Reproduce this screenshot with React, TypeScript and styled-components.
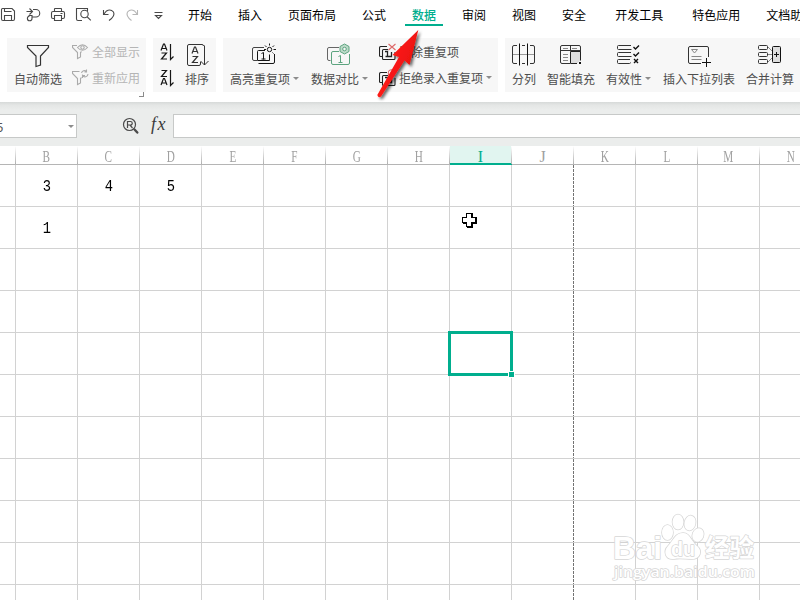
import React from "react";
import styled, { createGlobalStyle, css } from "styled-components";

const GREEN = "#00ae8e";

const GlobalStyle = createGlobalStyle`
  *, *::before, *::after { box-sizing: border-box; }
  html, body { margin: 0; padding: 0; background: #fff; overflow: hidden; }
  body { font: 12px/16px "Noto Sans CJK SC", sans-serif; color: #000; }
  svg { display: block; flex: none; }
`;

const Window = styled.div`
  position: relative;
  width: 800px;
  height: 600px;
  overflow: hidden;
  background: #fff;
`;

const MenuBar = styled.div`
  display: flex;
  height: 30px;
`;

const QuickTools = styled.div`
  display: flex;
  width: 188px;
  height: 30px;
  flex: none;
`;

const MenuItem = styled.div<{ $active?: boolean; $gap?: number }>`
  flex: none;
  height: 26px;
  padding-top: 6px;
  margin-right: ${(p) => (p.$active ? 19 : p.$gap ?? 26)}px;
  line-height: 17px;
  white-space: nowrap;
  ${(p) =>
    p.$active &&
    css`
      margin-left: -7px;
      padding-left: 7px;
      padding-right: 7px;
      color: ${GREEN};
      font-weight: 500;
      border-bottom: 2px solid ${GREEN};
    `}
`;

const Ribbon = styled.div`
  display: flex;
  gap: 7px;
  height: 72px;
  padding: 8px 0 0 7px;
`;

const Group = styled.div<{ $w: number }>`
  position: relative;
  display: flex;
  flex: none;
  width: ${(p) => p.$w}px;
  height: 54px;
  background: #f7f7f7;
`;

const Tool = styled.div<{ $w: number; $ml?: number; $icon?: number }>`
  display: flex;
  flex-direction: column;
  align-items: flex-start;
  flex: none;
  width: ${(p) => p.$w}px;
  margin-left: ${(p) => p.$ml ?? 0}px;
  padding-top: 4px;
  > svg {
    margin-left: ${(p) => p.$icon ?? 0}px;
  }
`;

const Label = styled.div<{ $muted?: boolean }>`
  display: flex;
  align-items: center;
  height: 17px;
  margin-top: -1px;
  line-height: 17px;
  white-space: nowrap;
  color: ${(p) => (p.$muted ? "#b5b5b5" : "#4d4d4d")};
`;

const ToolLabel = styled(Label)`
  margin-top: 2px;
`;

const Stack = styled.div<{ $w: number; $ml?: number }>`
  display: flex;
  flex-direction: column;
  flex: none;
  width: ${(p) => p.$w}px;
  margin-left: ${(p) => p.$ml ?? 0}px;
  padding-top: 1px;
`;

const StackRow = styled.div`
  display: flex;
  align-items: center;
  height: 26px;
  gap: 2px;
`;

const Caret = styled.i`
  width: 0;
  height: 0;
  margin-left: 3px;
  border: 3px solid transparent;
  border-top-color: #8c8c8c;
  border-bottom: 0;
`;

const Corner = styled.i`
  position: absolute;
  right: 2px;
  bottom: -5px;
  width: 5px;
  height: 5px;
  border: solid #8a8a8a;
  border-width: 0 1px 1px 0;
`;

const FormulaBar = styled.div`
  display: flex;
  height: 44px;
  padding-top: 12px;
  background: linear-gradient(#d6d9d8 0, #e4e6e5 3px, #ebedec 8px);
`;

const NameBox = styled.div`
  display: flex;
  align-items: center;
  justify-content: space-between;
  flex: none;
  width: 77px;
  height: 24px;
  padding-right: 2px;
  background: #fff;
  border: solid #c7c9c8;
  border-width: 1px 1px 1px 0;
  font: 13px "Noto Sans", sans-serif;
  color: #555;
`;

const NameText = styled.span`
  margin: 2px 0 0 -4px;
`;

const FormulaTools = styled.div`
  display: flex;
  flex: none;
  width: 96px;
  padding-left: 45px;
`;

const Fx = styled.span`
  margin: 0 0 0 11px;
  font: italic 18px/21px "Liberation Serif", serif;
  color: #3c3c3c;
  letter-spacing: 1.5px;
`;

const FormulaInput = styled.div`
  flex: 1;
  height: 24px;
  background: #fff;
  border: 1px solid #c7c9c8;
  border-right: 0;
`;

const SheetHeader = styled.div`
  display: flex;
  height: 19px;
  background: #fff;
`;

const HeaderCell = styled.div<{ $first?: boolean; $active?: boolean }>`
  flex: none;
  position: relative;
  display: flex;
  align-items: center;
  justify-content: center;
  width: ${(p) => (p.$first ? 16 : 62)}px;
  height: 19px;
  padding: ${(p) => (p.$active ? 4 : 3)}px 1px 0 0;
  color: ${(p) => (p.$active ? GREEN : "#a0a0a0")};
  background: ${(p) => (p.$active ? "#e1f5f0" : "#fff")};
  border-bottom: ${(p) => (p.$active ? `2px solid ${GREEN}` : "1px solid #b5b5b5")};
  font: 16px/16px "Liberation Serif", serif;
  &::after {
    content: "";
    position: absolute;
    right: 0;
    top: 0;
    width: 1px;
    height: 18px;
    background: linear-gradient(#fff, #b0b0b0);
  }
`;

const Letter = styled.span<{ $wide?: boolean }>`
  transform: scaleX(${(p) => (p.$wide ? 1 : 0.7)});
`;

const SheetRow = styled.div`
  display: flex;
  height: 42px;
`;

const Cell = styled.div<{ $first?: boolean; $pageEnd?: boolean }>`
  flex: none;
  display: flex;
  align-items: center;
  justify-content: center;
  width: ${(p) => (p.$first ? 16 : 62)}px;
  height: 42px;
  padding: 3px 0 0 1px;
  border-bottom: 1px solid #d2d2d2;
  border-right: ${(p) => (p.$pageEnd ? "0" : "1px solid #d2d2d2")};
  font: 16px/16px "Liberation Mono", monospace;
  ${(p) =>
    p.$pageEnd &&
    css`
      background: repeating-linear-gradient(#737373 0 3px, #fff 3px 4px) right / 1px 100% no-repeat;
    `}
`;

const Digit = styled.span`
  transform: scaleX(0.86);
`;

const Selection = styled.div`
  position: absolute;
  left: 448px;
  top: 331px;
  width: 65px;
  height: 45px;
  border: 3px solid ${GREEN};
  &::after {
    content: "";
    position: absolute;
    right: -5px;
    bottom: -5px;
    width: 7px;
    height: 7px;
    background: ${GREEN};
    border: 1px solid #fff;
  }
`;

const Overlay = styled.svg<{ $x: number; $y: number }>`
  position: absolute;
  left: ${(p) => p.$x}px;
  top: ${(p) => p.$y}px;
  overflow: visible;
`;

type IconProps = { w: number; h: number; stroke?: string; sw?: number; children: React.ReactNode };
const Icon = ({ w, h, stroke = "#333", sw = 1, children }: IconProps) => (
  <svg width={w} height={h} viewBox={`0 0 ${w} ${h}`} fill="none" stroke={stroke} strokeWidth={sw}>
    {children}
  </svg>
);

const QuickIcons = () => (
  <Icon w={170} h={30} stroke="#484848" sw={1.1}>
    <path d="M1.5 19V9.500q0-1 1-1h9.500l2.500 2.500v8q0 1.500-1.500 1.500H3q-1.500 0-1.500-1.500zM4.500 8.500v3h7M4.500 20v-4.500h7V20" />
    <path d="M26.500 11.500h6M29.500 8.500l3 3-3 3M33 9.500h3a3.700 3.700 0 0 1 0 7.500h-4.500M28.500 15.500h3.500v3a2.300 2.300 0 1 1-2.500-2.300" />
    <path d="M54.500 11.500V9q0-.5.5-.5h6q.5 0 .5.500v2.500M54 18.500h-1q-1.500 0-1.500-1.500v-4q0-1.500 1.500-1.500h10q1.500 0 1.500 1.500v4q0 1.500-1.500 1.500h-1M54.500 15.500h7v5h-7zM60.500 13.500h2" />
    <path d="M82 20.500h-4q-1.500 0-1.500-1.500V8.500h11v3" />
    <circle cx="84.500" cy="14" r="3.700" />
    <path d="M87.300 17l3.500 3.300" />
    <path d="M103.500 10v4.500h5M103.500 14.500l3-3.500q4-2.500 7 1 2 4-4.500 8.500" />
    <path stroke="#b6b6b6" d="M137.500 10v4.500h-5M137.500 14.500l-3-3.500q-4-2.500-7 1-2 4 4 8.500" />
    <path d="M154.500 12.500h8M155.500 15.500h6l-3 3z" />
  </Icon>
);

const FunnelIcon = () => (
  <Icon w={24} h={26} sw={1.2}>
    <path d="M1.500 3.500h21v2l-8 8.500v9l-4.500 1.500V14L1.500 5.500z" />
  </Icon>
);

const MiniFunnel = ({ kind }: { kind: "eye" | "refresh" }) => (
  <Icon w={18} h={18} stroke="#aaa" sw={1.1}>
    {kind === "eye" ? (
      <>
        <path d="M5 2.500H.5v2l5 5v6l3-1.500V9.500l1-1" />
        <path d="M5.500 4.500q5-5.500 10 0-5 5.500-10 0z" />
        <circle cx="10.500" cy="4.500" r="1.700" />
      </>
    ) : (
      <>
        <path d="M7.500 2.500H.5v2l5 5v6l3-1.500V9.500l1-1" />
        <path d="M9.500 4a3 3 0 0 1 5-1.500V.5M15 3h-2.500M16 5a3 3 0 0 1-5.500 1.500V9M10.500 6.500h2.500" />
      </>
    )}
  </Icon>
);

const A = "M0 6.500L2.500 0H3.500L6 6.500M1 4.500h4";
const Z = "M.5 .5h5L.5 6.500h5.500";
const SortIcon = ({ desc }: { desc?: boolean }) => (
  <Icon w={16} h={18} stroke="#161616" sw={1.2}>
    <path transform="translate(1 1)" d={desc ? Z : A} />
    <path transform="translate(1 9.500)" d={desc ? A : Z} />
    <path d="M10.500 1v15.500l3-3" />
  </Icon>
);

const SortBigIcon = () => (
  <Icon w={24} h={26}>
    <path d="M15.500 20v2q0 1.500-1.500 1.500H4q-1.500 0-1.500-1.500V4Q2.500 2.500 4 2.500h13q1.500 0 1.500 1.500" />
    <path strokeWidth="1.200" transform="translate(7 5)" d={A} />
    <path strokeWidth="1.200" transform="translate(7 14)" d={Z} />
    <path d="M19.500 3.500v19.500M15.500 19l4 4 4-4" />
  </Icon>
);

const HighlightIcon = () => (
  <Icon w={28} h={26} stroke="#444">
    <path d="M14 5.500H4q-1.500 0-1.500 1.500v10q0 1.500 1.500 1.500h3" />
    <g stroke="#161616">
      <path d="M15 8.500H8.500q-1 0-1 1v9h12v-6M8.500 21.500H23q1.500 0 1.500-1.500v-8" />
      <path d="M11.500 11.500l2-1v7M11.500 17h4" />
      <circle cx="19.500" cy="7.500" r="2.200" />
      <path d="M19.500 1.500v2M14 7.500h2M23.500 7.500h2.500M15 3.500l1.500 1.500M24 3.500l-1.500 1.500M23.500 11.500l-1-1" />
    </g>
  </Icon>
);

const CompareIcon = () => (
  <Icon w={28} h={26} stroke="#666">
    <path d="M14 5.500H4q-1.500 0-1.500 1.500v10q0 1.500 1.500 1.500h1.500" />
    <g stroke="#5ca47f">
      <path d="M14 9.500H8q-1.500 0-1.500 1.500v10q0 1.500 1.500 1.500h15q1.500 0 1.500-1.500v-9" />
      <path d="M13.500 14.500l2-1v7M13.500 20.500h4" />
      <path fill="#bddac9" d="M19.500 2l4.500 2.500v5L19.500 12 15 9.500v-5z" />
      <circle cx="19.500" cy="7" r="1.800" fill="#f7f7f7" />
    </g>
  </Icon>
);

const DuplicateIcon = ({ ban }: { ban?: boolean }) => (
  <Icon w={18} h={18} stroke="#222" sw={1.1}>
    <path d="M8 3.500H2Q.5 3.500.5 5v7.500q0 1 1 1H3M9 6.500H4.500q-1 0-1 1v8q0 1 1 1H15q1 0 1-1V9" />
    <path d="M6 8.500h2.500v5M6.500 13.500h6V9" strokeWidth="1.300" />
    {ban ? (
      <g stroke="#dd6969">
        <circle cx="12.500" cy="4" r="3.200" />
        <path d="M10.500 6l4-4" />
      </g>
    ) : (
      <path stroke="#dd6969" d="M9.500 1l7 6M16.500 1l-7 6" />
    )}
  </Icon>
);

const SplitIcon = () => (
  <Icon w={24} h={26}>
    <path d="M6 3.500H3q-1.500 0-1.500 1.500v15q0 1.500 1.500 1.500h3M11 3.500h3M11 21.500h3M19 3.500h3q1.500 0 1.500 1.500v15q0 1.500-1.500 1.500h-3" />
    <path stroke="#999" d="M2 12.500h21" />
    <path stroke="#111" d="M8.500 1.500v22M16.500 1.500v22" />
  </Icon>
);

const FillIcon = () => (
  <Icon w={24} h={26}>
    <path d="M12 21.500H4q-1.500 0-1.500-1.500V5Q2.500 3.500 4 3.500h17q1.500 0 1.500 1.500v13M2.500 8.500h20M12.500 3.500v5" />
    <path stroke="#888" d="M5 6.500h5M14 6.500h5M5 12.500h5M5 15.500h5M5 18.500h5" />
    <path fill="#ddd" stroke="#222" d="M19 21.500h-6.500v-12h10v9" />
    <path fill="#111" stroke="none" d="M21 20h2v2h-2z" />
  </Icon>
);

const ValidityIcon = () => (
  <Icon w={24} h={26}>
    <path d="M15 3.500H2.500q-1 0-1 1v2q0 1 1 1h13M15 10.500H2.500q-1 0-1 1v2q0 1 1 1h13M14 17.500H2.500q-1 0-1 1v2q0 1 1 1h11q1 0 1-1" />
    <path stroke="#111" strokeWidth="1.400" d="M17.500 5l2 2 3.500-3.500M17.500 12l2 2 3.500-3.500M18 17l4 4M22 17l-4 4" />
  </Icon>
);

const DropListIcon = () => (
  <Icon w={26} h={26}>
    <path d="M15 21.500H4q-1.500 0-1.500-1.500V6q0-1.500 1.500-1.500h17q1.500 0 1.500 1.500v9" />
    <path stroke="#888" d="M5.500 7.500h6L8.500 11zM5.500 14.500h10M5.500 17.500h10" />
    <path stroke="#111" d="M20.500 16v9M16 20.500h9" />
  </Icon>
);

const MergeIcon = () => (
  <Icon w={24} h={26}>
    <rect x="1.500" y="3.500" width="9" height="4" rx="1" />
    <rect x="1.500" y="10.500" width="9" height="4" rx="1" />
    <rect x="1.500" y="17.500" width="9" height="4" rx="1" />
    <path d="M11 5l4 4M11 12.500h4M11 20l4-4" stroke="#888" />
    <rect x="15.500" y="4.500" width="8" height="16" rx="1" fill="#ddd" stroke="#111" />
    <path stroke="#111" d="M17 12.500h5M19.500 10v5" />
  </Icon>
);

const menus: { text: string; gap?: number; active?: boolean }[] = [
  { text: "开始" }, { text: "插入" }, { text: "页面布局" }, { text: "公式" },
  { text: "数据", active: true }, { text: "审阅" }, { text: "视图" },
  { text: "安全", gap: 29 }, { text: "开发工具", gap: 29 }, { text: "特色应用" }, { text: "文档助手" },
];

const columns = ["", "B", "C", "D", "E", "F", "G", "H", "I", "J", "K", "L", "M", "N"];
const values: Record<string, string>[] = [{ B: "3", C: "4", D: "5" }, { B: "1" }, {}, {}, {}, {}, {}, {}, {}, {}, {}];

const RedArrow = () => (
  <Overlay $x={370} $y={24} width="60" height="80" viewBox="370 24 60 80">
    <defs>
      <linearGradient id="red" x1="0" y1="0" x2="1" y2=".6">
        <stop offset=".4" stopColor="#ff1c16" />
        <stop offset="1" stopColor="#e30e0e" />
      </linearGradient>
      <filter id="shade" x="-30%" y="-30%" width="170%" height="170%">
        <feDropShadow dx="2" dy="2" stdDeviation="1.500" floodColor="#000" floodOpacity=".6" />
      </filter>
    </defs>
    <path
      filter="url(#shade)"
      fill="url(#red)"
      d="M418.300 30L409.500 65L404.500 60.500L381 96.500Q378.500 98.500 377.300 95L399 57L392.500 55Z"
    />
  </Overlay>
);

const CrossCursor = () => (
  <Overlay $x={462} $y={213} width="15" height="15" viewBox="0 0 15 15" shapeRendering="crispEdges">
    <path d="M4 0h6l1 1v3h3l1 1v6h-4v4H5l-1-1v-3H1l-1-1V4h4z" fill="#000" />
    <path d="M5 1h4v4h4v4H9v4H5V9H1V5h4z" fill="#fff" />
  </Overlay>
);

const Watermark = () => (
  <Overlay $x={600} $y={508} width="200" height="92" viewBox="0 0 200 92">
    <g fill="#fff" stroke="#d6d6d6" strokeWidth="1.500" fontWeight="700" paintOrder="stroke" strokeLinejoin="round">
      <text x="13" y="51" fontFamily="Liberation Sans, sans-serif" fontSize="31" textLength="49" lengthAdjust="spacingAndGlyphs">Bai</text>
      <ellipse cx="67.500" cy="24.500" rx="5.500" ry="7.500" />
      <ellipse cx="78" cy="14" rx="5.500" ry="7.500" />
      <ellipse cx="90" cy="15" rx="5.500" ry="7.500" transform="rotate(12 90 15)" />
      <ellipse cx="98" cy="27" rx="5.500" ry="7" transform="rotate(20 98 27)" />
      <path d="M83 25c7 0 8 8 14 13s3 13-5 13c-6 0-13-1-18 0-9 1-11-8-6-13s7-13 15-13z" />
      <text x="71" y="48" fontFamily="Liberation Sans, sans-serif" fontSize="20" textLength="24" lengthAdjust="spacingAndGlyphs">du</text>
      <text x="105" y="49" fontFamily="Noto Sans CJK SC, sans-serif" fontSize="24.500">经验</text>
      <text x="14" y="69" fontFamily="Open Sans, sans-serif" fontSize="15" fontWeight="600" textLength="141" lengthAdjust="spacingAndGlyphs">jingyan.baidu.com</text>
    </g>
  </Overlay>
);

export default function App() {
  return (
    <Window>
      <GlobalStyle />
      <MenuBar>
        <QuickTools><QuickIcons /></QuickTools>
        {menus.map((m) => (
          <MenuItem key={m.text} $active={m.active} $gap={m.gap}>{m.text}</MenuItem>
        ))}
      </MenuBar>
      <Ribbon>
        <Group $w={139}>
          <Tool $w={48} $ml={7} $icon={12}><FunnelIcon /><ToolLabel>自动筛选</ToolLabel></Tool>
          <Stack $w={74} $ml={10}>
            <StackRow><MiniFunnel kind="eye" /><Label $muted>全部显示</Label></StackRow>
            <StackRow><MiniFunnel kind="refresh" /><Label $muted>重新应用</Label></StackRow>
          </Stack>
          <Corner />
        </Group>
        <Group $w={63}>
          <Stack $w={16} $ml={7}>
            <StackRow><SortIcon /></StackRow>
            <StackRow><SortIcon desc /></StackRow>
          </Stack>
          <Tool $w={24} $ml={9}><SortBigIcon /><ToolLabel>排序</ToolLabel></Tool>
        </Group>
        <Group $w={275}>
          <Tool $w={69} $ml={7} $icon={20}><HighlightIcon /><ToolLabel>高亮重复项<Caret /></ToolLabel></Tool>
          <Tool $w={57} $ml={12} $icon={14}><CompareIcon /><ToolLabel>数据对比<Caret /></ToolLabel></Tool>
          <Stack $w={119} $ml={11}>
            <StackRow><DuplicateIcon /><Label>删除重复项</Label></StackRow>
            <StackRow><DuplicateIcon ban /><Label>拒绝录入重复项<Caret /></Label></StackRow>
          </Stack>
        </Group>
        <Group $w={302}>
          <Tool $w={24} $ml={7} $icon={-1}><SplitIcon /><ToolLabel>分列</ToolLabel></Tool>
          <Tool $w={48} $ml={11} $icon={11}><FillIcon /><ToolLabel>智能填充</ToolLabel></Tool>
          <Tool $w={45} $ml={11} $icon={10}><ValidityIcon /><ToolLabel>有效性<Caret /></ToolLabel></Tool>
          <Tool $w={72} $ml={12} $icon={23}><DropListIcon /><ToolLabel>插入下拉列表</ToolLabel></Tool>
          <Tool $w={48} $ml={11} $icon={11}><MergeIcon /><ToolLabel>合并计算</ToolLabel></Tool>
        </Group>
      </Ribbon>
      <FormulaBar>
        <NameBox><NameText>5</NameText><Caret /></NameBox>
        <FormulaTools>
          <Icon w={18} h={22} stroke="#4a4a4a" sw={1.2}>
            <circle cx="7.500" cy="10.500" r="6" />
            <path d="M5.500 14V7.500h3a1.700 1.700 0 0 1 0 3.500h-3M8 11l2.500 3" />
            <path strokeWidth="2.400" strokeLinecap="round" d="M12.500 15.500l2.800 3" />
          </Icon>
          <Fx>fx</Fx>
        </FormulaTools>
        <FormulaInput />
      </FormulaBar>
      <SheetHeader>
        {columns.map((c) => (
          <HeaderCell key={c} $first={!c} $active={c === "I"}>
            <Letter $wide={c === "I" || c === "J"}>{c}</Letter>
          </HeaderCell>
        ))}
      </SheetHeader>
      {values.map((row, i) => (
        <SheetRow key={i}>
          {columns.map((c) => (
            <Cell key={c} $first={!c} $pageEnd={c === "J"}>{row[c] && <Digit>{row[c]}</Digit>}</Cell>
          ))}
        </SheetRow>
      ))}
      <Selection />
      <CrossCursor />
      <Watermark />
      <RedArrow />
    </Window>
  );
}
